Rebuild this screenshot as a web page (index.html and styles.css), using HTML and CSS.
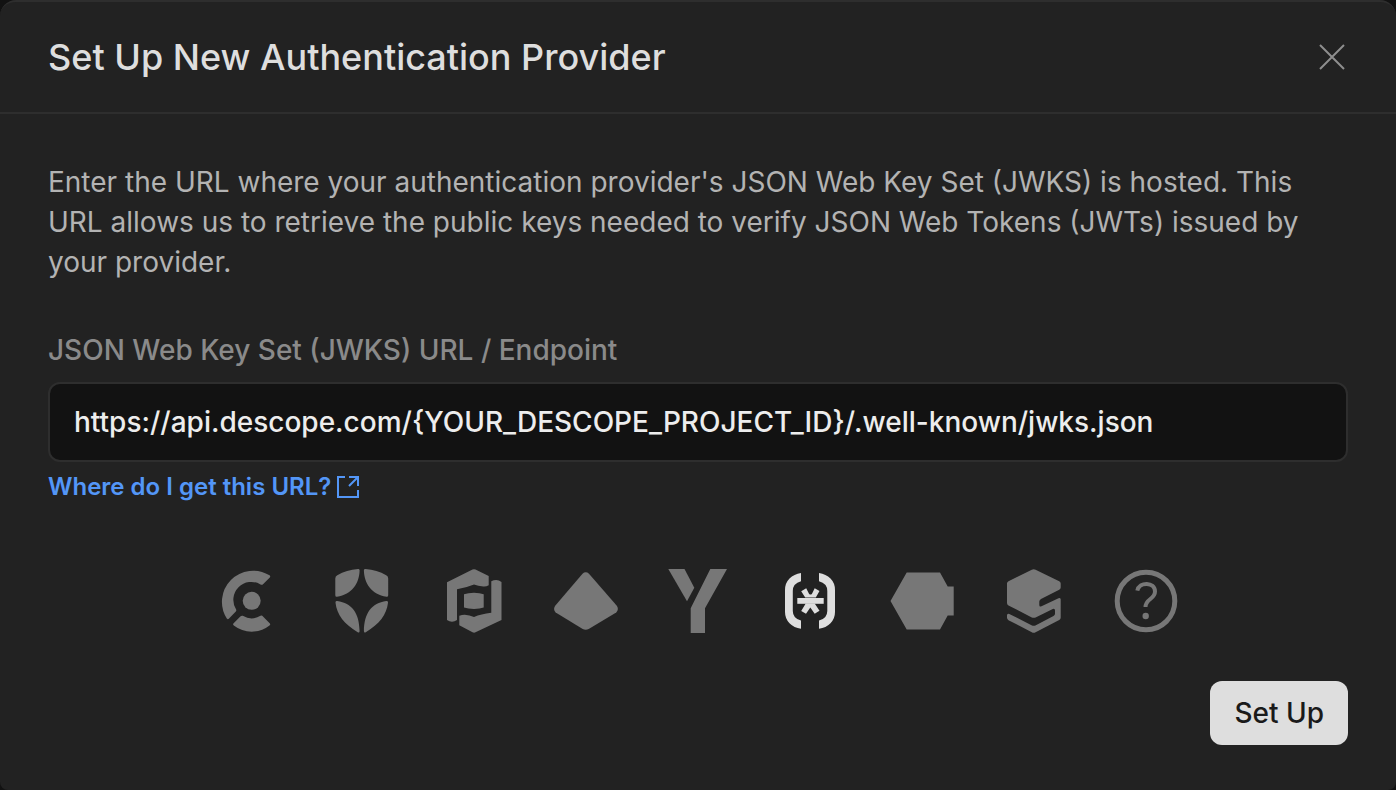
FILE: index.html
```html
<!DOCTYPE html>
<html lang="en">
<head>
    <meta charset="UTF-8">
    <meta name="viewport" content="width=device-width, initial-scale=1.0">
    <title>Set Up New Authentication Provider</title>
    <link rel="stylesheet" href="styles.css">
</head>
<body>
    <main class="modal">
        <header class="modal-header">
            <h1>Set Up New Authentication Provider</h1>
            <button type="button" class="close-btn" aria-label="Close">
                <svg viewBox="0 0 32 32"><path d="M4 4L28 28M28 4L4 28"/></svg>
            </button>
        </header>

        <form class="modal-body">
            <p class="description">Enter the URL where your authentication provider's JSON Web Key Set (JWKS) is hosted. This URL allows us to retrieve the public keys needed to verify JSON Web Tokens (JWTs) issued by your provider.</p>

            <label for="jwks-url">JSON Web Key Set (JWKS) URL / Endpoint</label>
            <input type="text" id="jwks-url" value="https://api.descope.com/{YOUR_DESCOPE_PROJECT_ID}/.well-known/jwks.json">
            <a href="#" class="help-link">
                Where do I get this URL?
                <svg viewBox="0 0 24 24"><path d="M9 2H2V22H22V15M13 2H22V11M22 2L13 11"/></svg>
            </a>

            <div class="providers">
                <!-- Clerk -->
                <button type="button" class="provider" aria-label="Clerk">
                    <svg viewBox="0 0 64 64">
                        <circle cx="33.7" cy="31.8" r="9"/>
                        <path d="M51.5 6.3Q52.8 7.4 51.8 8.5L45 15.3Q44 16.3 42.5 15.5A17.9 17.9 0 0 0 18 40.2Q18.7 41.6 17.8 42.6L10.8 49.8Q9.8 50.8 8.8 49.6A31.2 31.2 0 0 1 51.5 6.3Z"/>
                        <path d="M15.4 54.4L22.3 47.5Q23.3 46.5 24.8 46.8A17.5 17.5 0 0 0 42.5 46.8Q44 46.2 45 47.4L51.9 54.4Q52.8 55.4 51.5 56.5A29 29 0 0 1 15.8 56.5Q14.5 55.4 15.4 54.4Z"/>
                    </svg>
                </button>
                <!-- Auth0 -->
                <button type="button" class="provider" aria-label="Auth0">
                    <svg viewBox="0 0 64 64">
                        <path d="M28 0Q29.7-.2 29.6 1.5C29.4 14 22 25.5 7 27.8Q5.3 28 5.3 26.3V9.5Q5.3 7.3 7.3 6.2Q16.5 1 28 0Z"/>
                        <path d="M35.5 0Q33.8-.2 33.9 1.5C34.1 14 41.5 25.5 56.5 27.8Q58.2 28 58.2 26.3V9.5Q58.2 7.3 56.2 6.2Q47 1 35.5 0Z"/>
                        <path d="M7.2 32C22 34.2 29.3 44 29.6 62Q29.5 64.3 27.7 63.2C14 55 7 46 5.5 33.8Q5.3 31.8 7.2 32Z"/>
                        <path d="M56.3 32C41.5 34.2 34.2 44 33.9 62Q34 64.3 35.8 63.2C49.5 55 56.5 46 58 33.8Q58.2 31.8 56.3 32Z"/>
                    </svg>
                </button>
                <!-- PropelAuth -->
                <button type="button" class="provider" aria-label="PropelAuth">
                    <svg viewBox="0 0 64 64">
                        <path d="M5 13.3L30.5 .6Q32 0 33.5 .6L46.7 7V16.3Q44 17.8 41.3 17.5Q36 17 32 15.6Q25 18.6 15 20.3V51Q12.5 52.8 10 52.8T5 51Z"/>
                        <path d="M49.3 12.3Q51.5 11 54.2 11T59.5 13V51L33.5 63.3Q32 64 30.5 63.2L17.3 56.3V46.7Q20 45.7 22.7 45.7Q27.5 46.2 32 47.9Q39 45 49.3 43.7Z"/>
                        <path d="M22 25.2Q26 23.7 32 23.7T41.7 25.2V38.6Q38 40 32 40T22 38.6Z"/>
                    </svg>
                </button>
                <!-- Rounded diamond -->
                <button type="button" class="provider" aria-label="Provider 4">
                    <svg viewBox="0 0 64 64">
                        <path d="M28.5 4.7Q31.7 2 35 4.7L62.8 36.8Q65.2 40.5 62.2 43.4L34.7 60Q31.7 61.5 28.7 60L1.7 43.4Q-1.3 40.5 1.2 36.8Z"/>
                    </svg>
                </button>
                <!-- Y mark -->
                <button type="button" class="provider" aria-label="Provider 5">
                    <svg viewBox="0 0 64 64">
                        <path d="M2.3 0H18.5L28.3 18.7L21 32.3Z"/>
                        <path d="M44.3 0H61L39 39.3V64H24.7V39.3Z"/>
                    </svg>
                </button>
                <!-- Descope -->
                <button type="button" class="provider active" aria-label="Descope" aria-pressed="true">
                    <svg viewBox="0 0 64 64">
                        <path d="M23 4V12.3Q14.8 14.5 14.8 22V42Q14.8 49.5 23 51.5V59.8Q16 58.8 11.5 54.2T7 43V21Q7 14.2 11.5 9.6T23 4Z"/>
                        <path d="M41 4V12.3Q49.3 14.5 49.3 22V42Q49.3 49.5 41 51.5V59.8Q48 58.8 52.5 54.2T57 43V21Q57 14.2 52.5 9.6T41 4Z"/>
                        <path d="M19.3 29H45.7V34.8H19.3Z"/>
                        <path d="M23.2 22.2L28.2 19.2L31 24.7Q32.5 26.4 34 24.7L36.7 19.2L41.5 22L37.8 28.4H27.2Z"/>
                        <path d="M27.7 34.5H36.7L41.5 41.7L36.7 44.7L32.3 38.5L28 44.7L23.2 41.9Z"/>
                    </svg>
                </button>
                <!-- Hexagon -->
                <button type="button" class="provider" aria-label="Provider 7">
                    <svg viewBox="0 0 64 64">
                        <path d="M.5 32L16.7 3.5H50L57.7 17.5H63.7V46.5H57.7L50 60.5H16.7Z"/>
                    </svg>
                </button>
                <!-- Stacked layers -->
                <button type="button" class="provider" aria-label="Provider 8">
                    <svg viewBox="0 0 64 64">
                        <path d="M6.5 12.3L29.8 .7Q31.7-.3 33.6 .7L57.2 12.3Q58.7 13 58.7 14.5V18.5Q58.7 20 57.2 20.8L39 30Q37.3 31 37.3 32.5V36Q37.3 38.3 39.5 37.3L56.5 29.2Q58.7 28.3 58.7 30.5V48.8Q58.7 50.3 57.2 51L33.6 63.2Q31.7 64.2 29.8 63.2L6.5 51.2Q5 50.3 5 48.8V46.5Q5 44 7.3 45L30 56.4Q31.7 57.2 33.4 56.4L51.5 47Q53 46.3 53 44.8V41.5Q53 39.2 50.8 40L33.6 48.4Q31.7 49.3 29.8 48.4L6.5 36.4Q5 35.6 5 34V14.5Q5 13 6.5 12.3Z"/>
                    </svg>
                </button>
                <!-- Other -->
                <button type="button" class="provider" aria-label="Other provider">
                    <svg viewBox="0 0 64 64">
                        <circle class="ring" cx="32" cy="32" r="28.8"/>
                        <path class="question" d="M23.3 21.7C25 12.5 41 12.5 41 22.5C41 30.5 31.5 29.5 31.5 38"/>
                        <circle cx="31.7" cy="47" r="3.2"/>
                    </svg>
                </button>
            </div>

            <button type="submit" class="submit-btn">Set Up</button>
        </form>
    </main>
</body>
</html>
```

FILE: styles.css
```css
* {
    margin: 0;
    padding: 0;
    box-sizing: border-box;
}

body {
    font-family: Inter, "Liberation Sans", sans-serif;
    background: #121212;
    color: #dedede;
}

button,
input {
    font-family: inherit;
}

.modal {
    min-height: 100vh;
    background: #222222;
    border-top: 2px solid #2e2e2e;
    border-radius: 16px 16px 8px 8px;
}

.modal-header {
    display: flex;
    align-items: center;
    justify-content: space-between;
    height: 112px;
    padding: 0 48px;
    border-bottom: 2px solid #2e2e2e;
}

.modal-header h1 {
    font-size: 36px;
    line-height: 44px;
    font-weight: 500;
}

.close-btn {
    width: 32px;
    height: 32px;
    background: none;
    border: none;
    cursor: pointer;
}

.close-btn svg {
    display: block;
    fill: none;
    stroke: #8f8f8f;
    stroke-width: 2;
}

.modal-body {
    display: flex;
    flex-direction: column;
    padding: 48px 48px 44px;
}

.description {
    margin-bottom: 48px;
    font-size: 28px;
    line-height: 40px;
    color: #b3b3b3;
}

.modal-body label {
    margin-bottom: 12px;
    font-size: 28px;
    line-height: 40px;
    font-weight: 500;
    color: #8a8a8a;
}

.modal-body input {
    height: 80px;
    padding: 0 24px;
    background: #121212;
    border: 2px solid #2e2e2e;
    border-radius: 12px;
    outline: none;
    color: #ededed;
    font-size: 28px;
    font-weight: 500;
}

.help-link {
    display: flex;
    align-items: center;
    align-self: flex-start;
    gap: 5px;
    margin: 8px 0 65px;
    color: #5396f7;
    font-size: 24px;
    line-height: 34px;
    font-weight: 600;
    text-decoration: none;
}

.help-link svg {
    width: 24px;
    height: 24px;
    fill: none;
    stroke: currentColor;
    stroke-width: 2;
}

.providers {
    display: flex;
    justify-content: center;
    gap: 48px;
    margin-bottom: 48px;
}

.provider {
    width: 64px;
    height: 64px;
    background: none;
    border: none;
    color: #777777;
    cursor: pointer;
}

.provider.active {
    color: #dedede;
}

.provider svg {
    display: block;
    fill: currentColor;
}

.provider .ring {
    fill: none;
    stroke: currentColor;
    stroke-width: 5;
}

.provider .question {
    fill: none;
    stroke: currentColor;
    stroke-width: 4;
}

.submit-btn {
    align-self: flex-end;
    height: 64px;
    padding: 0 24px;
    background: #dedede;
    border: none;
    border-radius: 12px;
    color: #1a1a1a;
    font-size: 28px;
    font-weight: 500;
    cursor: pointer;
}
```
